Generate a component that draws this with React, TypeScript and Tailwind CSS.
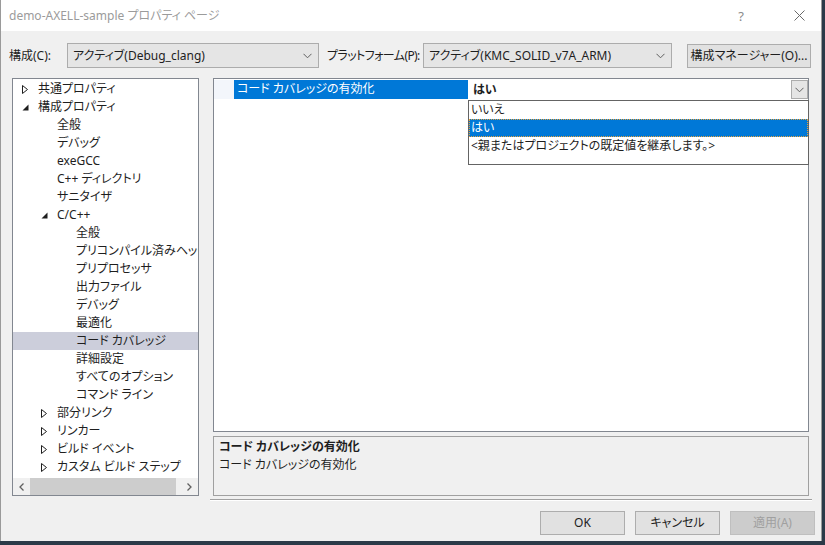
import { ReactNode } from "react";

type TreeItem = {
  label: string;
  level: 0 | 1 | 2;
  arrow?: "open" | "closed";
  selected?: boolean;
};

const treeItems: TreeItem[] = [
  { label: "共通プロパティ", level: 0, arrow: "closed" },
  { label: "構成プロパティ", level: 0, arrow: "open" },
  { label: "全般", level: 1 },
  { label: "デバッグ", level: 1 },
  { label: "exeGCC", level: 1 },
  { label: "C++ ディレクトリ", level: 1 },
  { label: "サニタイザ", level: 1 },
  { label: "C/C++", level: 1, arrow: "open" },
  { label: "全般", level: 2 },
  { label: "プリコンパイル済みヘッダー", level: 2 },
  { label: "プリプロセッサ", level: 2 },
  { label: "出力ファイル", level: 2 },
  { label: "デバッグ", level: 2 },
  { label: "最適化", level: 2 },
  { label: "コード カバレッジ", level: 2, selected: true },
  { label: "詳細設定", level: 2 },
  { label: "すべてのオプション", level: 2 },
  { label: "コマンド ライン", level: 2 },
  { label: "部分リンク", level: 1, arrow: "closed" },
  { label: "リンカー", level: 1, arrow: "closed" },
  { label: "ビルド イベント", level: 1, arrow: "closed" },
  { label: "カスタム ビルド ステップ", level: 1, arrow: "closed" },
];

const levelPad = ["pl-[9px]", "pl-[28px]", "pl-[47px]"];

function Chevron({ className = "" }: { className?: string }) {
  return (
    <svg width="9" height="6" viewBox="0 0 9 6" className={className}>
      <path d="M0.5 0.8 L4.5 4.8 L8.5 0.8" fill="none" stroke="#606060" strokeWidth="1" />
    </svg>
  );
}

function Arrow({ kind }: { kind: "open" | "closed" }) {
  if (kind === "open") {
    return (
      <svg width="7" height="7" viewBox="0 0 7 7">
        <path d="M6.5 0.5 L6.5 6.5 L0.5 6.5 Z" fill="#1e1e1e" />
      </svg>
    );
  }
  return (
    <svg width="6" height="9" viewBox="0 0 6 9">
      <path d="M0.5 0.5 L5.5 4.5 L0.5 8.5 Z" fill="none" stroke="#1e1e1e" strokeWidth="1" />
    </svg>
  );
}

function Select({ width, children }: { width: string; children: ReactNode }) {
  return (
    <div
      className={`${width} flex h-[25px] shrink-0 items-center justify-between border border-[#acacac] bg-[#e5e5e5] pl-[5px] pr-[6px]`}
    >
      <span className="whitespace-nowrap">{children}</span>
      <Chevron />
    </div>
  );
}

function DialogButton({ children, disabled }: { children: ReactNode; disabled?: boolean }) {
  return (
    <div
      className={`flex h-[24px] w-[85px] items-center justify-center border ${
        disabled
          ? "border-[#bfbfbf] bg-[#cccccc] text-[#a0a0a0]"
          : "border-[#adadad] bg-[#e1e1e1] text-[#1e1e1e]"
      }`}
    >
      {children}
    </div>
  );
}

export default function App() {
  const font =
    "font-['Noto_Sans','Noto_Sans_CJK_JP',sans-serif] [font-feature-settings:'palt'] text-[12px] leading-[18px]";

  return (
    <div className={`h-[545px] w-[825px] overflow-hidden bg-[#2b3a48] ${font}`}>
      <div className="flex h-[541px] w-[822px] flex-col border-l border-r border-[#9a9a9a] bg-[#f0f0f0] text-[#1e1e1e]">
        {/* title bar */}
        <div className="flex h-[31px] items-center justify-between bg-white pl-[8px]">
          <span className="text-[#9b9b9b]">demo-AXELL-sample プロパティ ページ</span>
          <div className="flex items-center">
            <span className="mr-[50px] text-[13px] text-[#8a8a8a]">?</span>
            <svg width="11" height="11" viewBox="0 0 11 11" className="mr-[16px]">
              <path d="M0.5 0.5 L10.5 10.5 M10.5 0.5 L0.5 10.5" stroke="#6a6a6a" strokeWidth="1" />
            </svg>
          </div>
        </div>

        {/* configuration row */}
        <div className="mt-[12px] flex h-[25px] items-center whitespace-nowrap pl-[8px]">
          <span className="w-[58px] shrink-0">構成(C):</span>
          <Select width="w-[252px]">アクティブ(Debug_clang)</Select>
          <span className="ml-[8px] w-[96px] shrink-0 overflow-hidden tracking-[-0.6px]">
            プラットフォーム(P):
          </span>
          <Select width="w-[249px]">アクティブ(KMC_SOLID_v7A_ARM)</Select>
          <div className="ml-[15px] flex h-[24px] w-[124px] shrink-0 items-center justify-center border border-[#adadad] bg-[#e1e1e1]">
            構成マネージャー(O)...
          </div>
        </div>

        {/* main area */}
        <div className="mt-[10px] flex pl-[11px]">
          {/* tree */}
          <div className="flex h-[418px] w-[187px] shrink-0 flex-col border border-[#828790] bg-white">
            <div className="flex-1 overflow-hidden pt-[1px]">
              {treeItems.map((item, i) => (
                <div
                  key={i}
                  className={`flex h-[18px] items-center whitespace-nowrap ${levelPad[item.level]} ${
                    item.selected ? "bg-[#cccedb]" : ""
                  }`}
                >
                  <span className="flex w-[16px] shrink-0 items-center">
                    {item.arrow && <Arrow kind={item.arrow} />}
                  </span>
                  <span className="shrink-0">{item.label}</span>
                </div>
              ))}
            </div>
            {/* horizontal scrollbar */}
            <div className="flex h-[17px] items-center bg-[#f0f0f0]">
              <div className="flex w-[17px] items-center justify-center">
                <svg width="5" height="8" viewBox="0 0 5 8">
                  <path d="M4.5 0.5 L1 4 L4.5 7.5" fill="none" stroke="#606060" strokeWidth="1.3" />
                </svg>
              </div>
              <div className="h-[17px] w-[146px] bg-[#cdcdcd]" />
              <div className="flex-1" />
              <div className="flex w-[17px] items-center justify-center">
                <svg width="5" height="8" viewBox="0 0 5 8">
                  <path d="M0.5 0.5 L4 4 L0.5 7.5" fill="none" stroke="#606060" strokeWidth="1.3" />
                </svg>
              </div>
            </div>
          </div>

          {/* right column */}
          <div className="ml-[14px] flex w-[596px] flex-col">
            <div className="relative h-[354px] border border-[#828790] bg-white">
              <div className="mt-[1px] flex h-[19px]">
                <div className="w-[20px] bg-[#f3f6fb]" />
                <div className="w-[234px] bg-[#0078d7] pl-[3px] text-white">コード カバレッジの有効化</div>
                <div className="flex flex-1 items-center justify-between pl-[5px]">
                  <span className="font-bold">はい</span>
                  <div className="flex h-[19px] w-[17px] items-center justify-center border border-[#acacac] bg-[#e5e5e5]">
                    <Chevron />
                  </div>
                </div>
              </div>

              {/* dropdown list */}
              <div className="absolute left-[254px] top-[21px] h-[65px] w-[341px] border border-[#646464] bg-white">
                <div className="h-[18px] pl-[2px]">いいえ</div>
                <div className="h-[18px] border border-dotted border-[#e8a33c] bg-[#0078d7] pl-[1px] leading-[16px] text-white">
                  はい
                </div>
                <div className="h-[18px] pl-[2px]">&lt;親またはプロジェクトの既定値を継承します。&gt;</div>
              </div>
            </div>

            <div className="mt-[4px] h-[60px] border border-[#a0a0a0] bg-[#f0f0f0] pl-[5px] pt-[1px]">
              <div className="font-bold">コード カバレッジの有効化</div>
              <div>コード カバレッジの有効化</div>
            </div>
          </div>
        </div>

        {/* separator */}
        <div className="ml-[209px] mt-[3px] w-[602px] border-b border-t border-b-white border-t-[#a0a0a0]" />

        {/* buttons */}
        <div className="mt-[10px] flex justify-end gap-[10px] pr-[6px]">
          <DialogButton>OK</DialogButton>
          <DialogButton>キャンセル</DialogButton>
          <DialogButton disabled>適用(A)</DialogButton>
        </div>
      </div>
    </div>
  );
}
